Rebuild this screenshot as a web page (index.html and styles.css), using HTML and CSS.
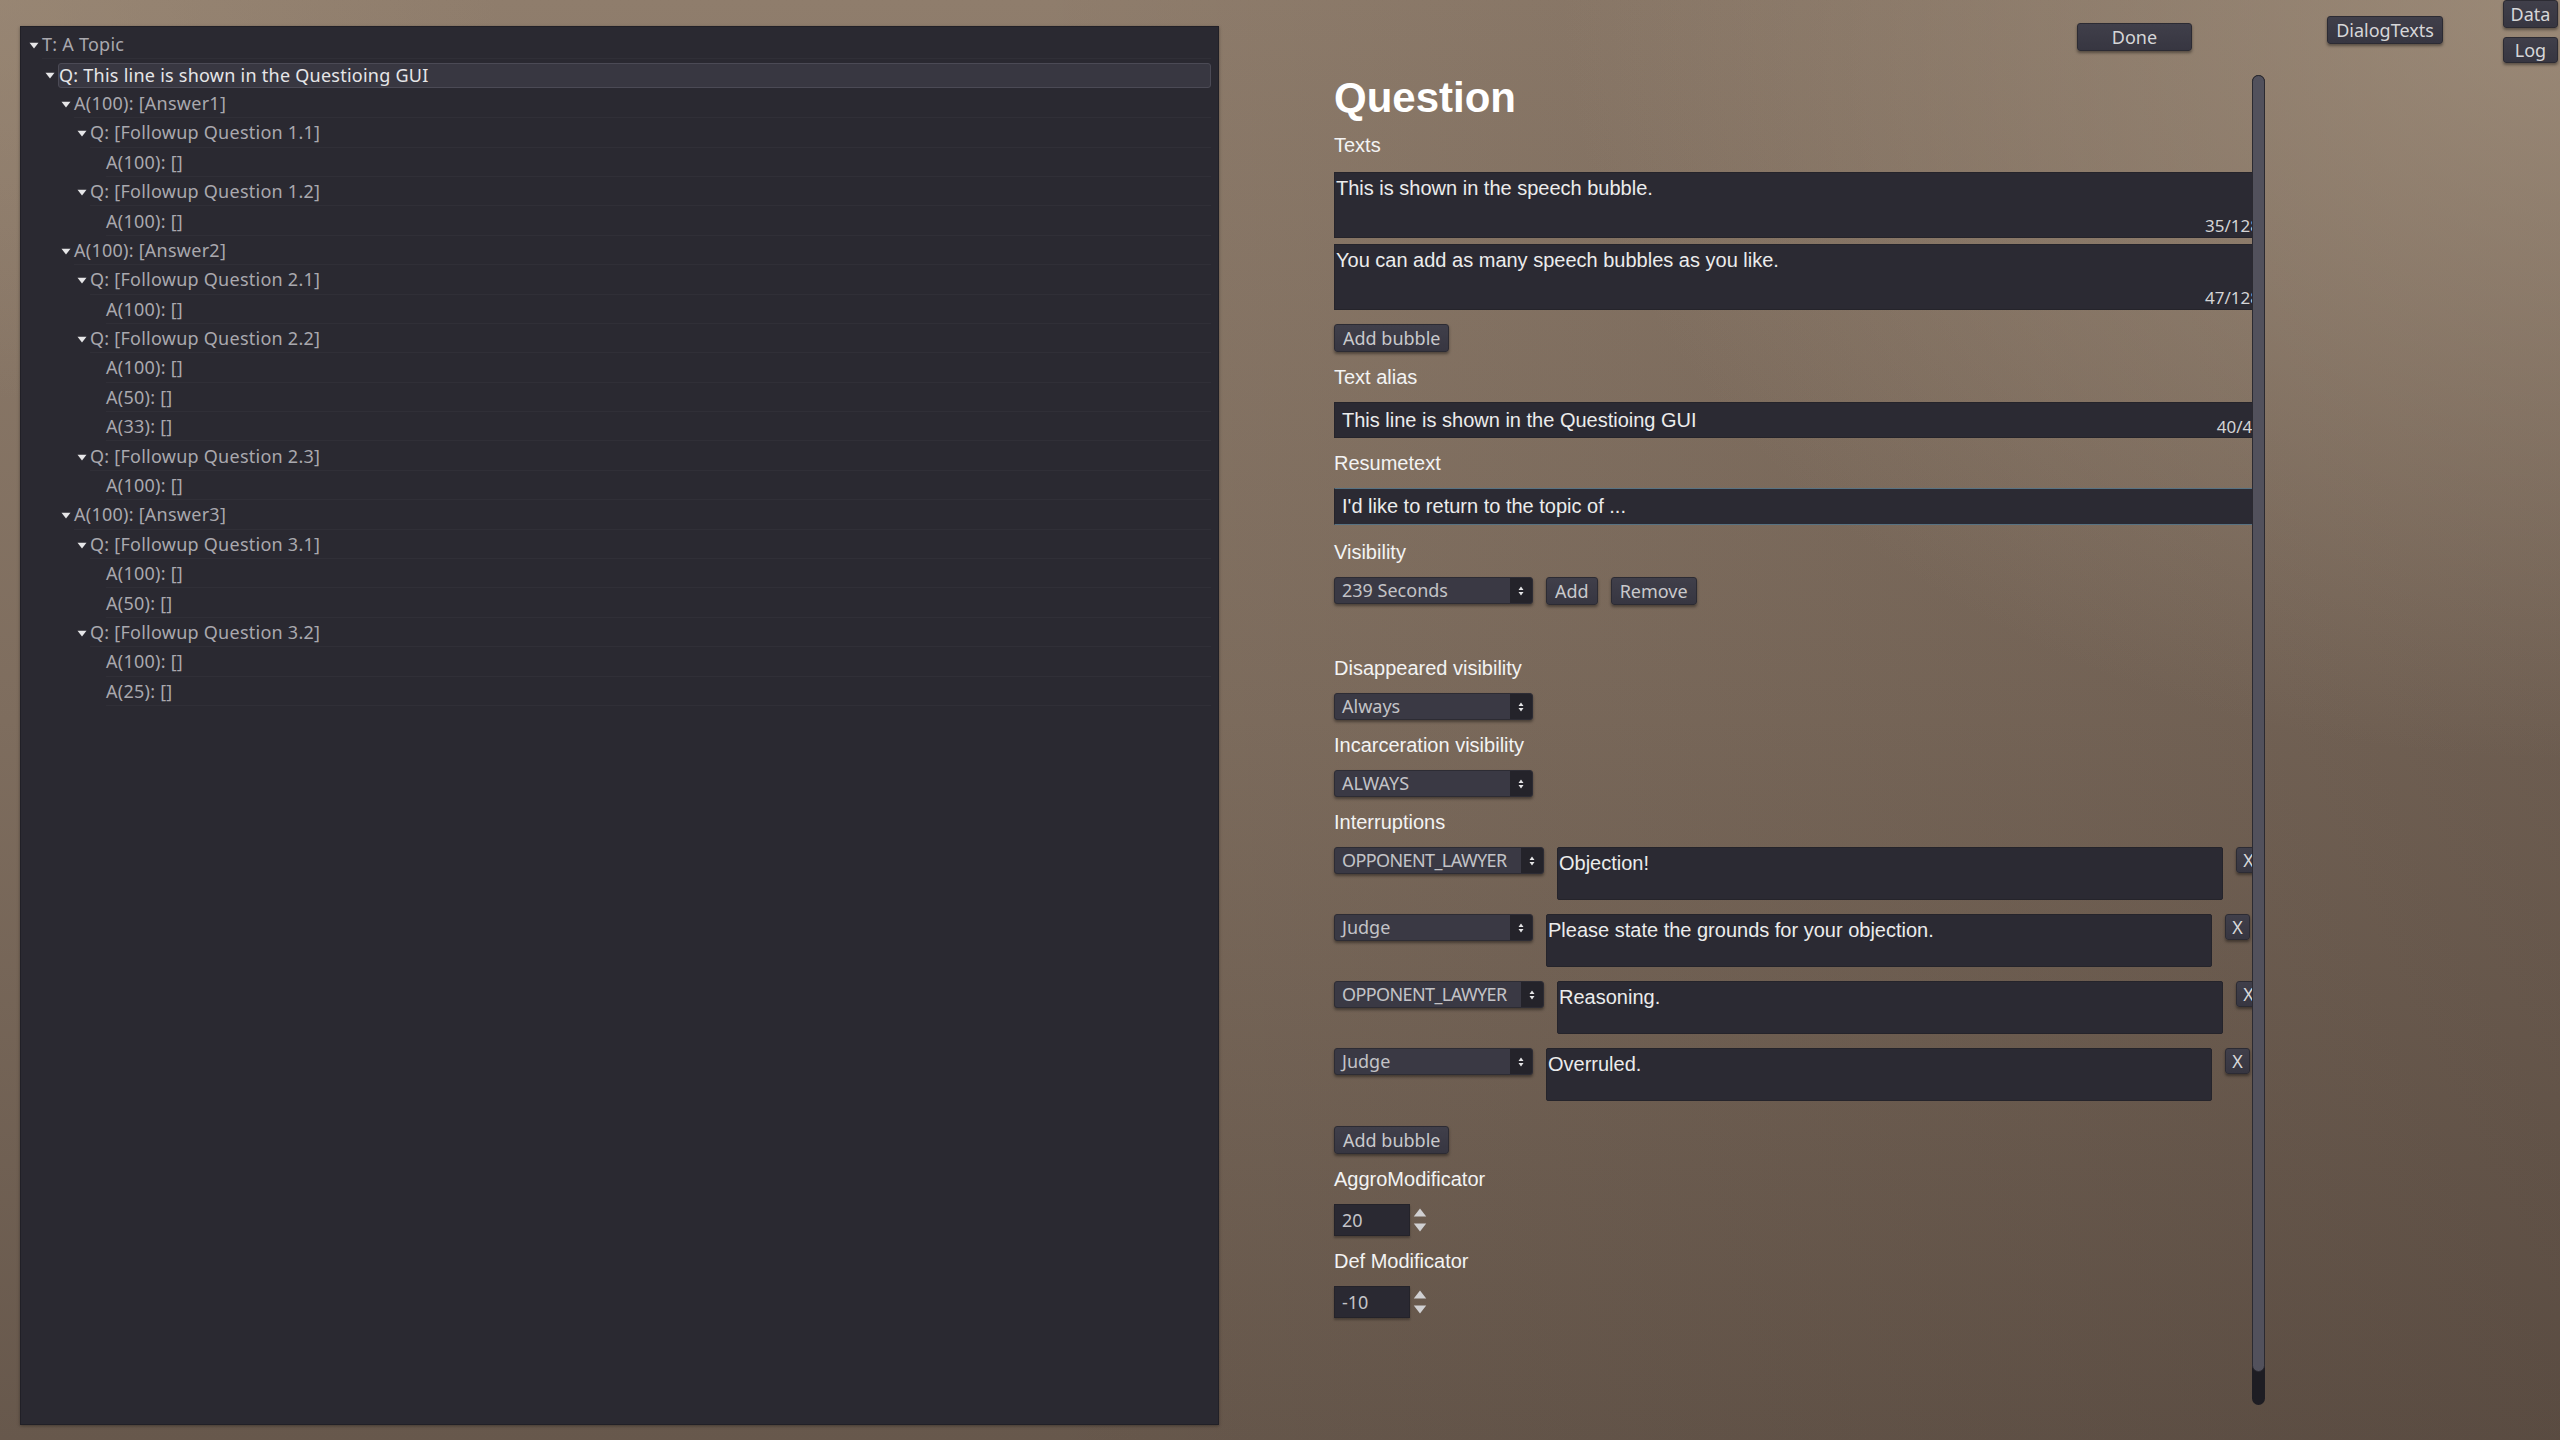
FILE: index.html
```html
<!DOCTYPE html>
<html lang="en">
<head>
    <meta charset="UTF-8" />
    <meta name="viewport" content="width=device-width, initial-scale=1" />
    <title>Dialog Editor - Question</title>
    <link rel="stylesheet" href="styles.css">
</head>
<body>
    <div class="tree-panel">
        <div class="tree-row l0"><svg class="twisty" viewBox="0 0 10 7"><path d="M0.5 0.8h9L5 6.4z"/></svg><span class="tree-label">T: A Topic</span></div>
        <div class="tree-row l1 selected"><svg class="twisty" viewBox="0 0 10 7"><path d="M0.5 0.8h9L5 6.4z"/></svg><span class="tree-label">Q: This line is shown in the Questioing GUI</span></div>
        <div class="tree-row l2"><svg class="twisty" viewBox="0 0 10 7"><path d="M0.5 0.8h9L5 6.4z"/></svg><span class="tree-label">A(100): [Answer1]</span></div>
        <div class="tree-row l3"><svg class="twisty" viewBox="0 0 10 7"><path d="M0.5 0.8h9L5 6.4z"/></svg><span class="tree-label">Q: [Followup Question 1.1]</span></div>
        <div class="tree-row l4"><span class="twisty"></span><span class="tree-label">A(100): []</span></div>
        <div class="tree-row l3"><svg class="twisty" viewBox="0 0 10 7"><path d="M0.5 0.8h9L5 6.4z"/></svg><span class="tree-label">Q: [Followup Question 1.2]</span></div>
        <div class="tree-row l4"><span class="twisty"></span><span class="tree-label">A(100): []</span></div>
        <div class="tree-row l2"><svg class="twisty" viewBox="0 0 10 7"><path d="M0.5 0.8h9L5 6.4z"/></svg><span class="tree-label">A(100): [Answer2]</span></div>
        <div class="tree-row l3"><svg class="twisty" viewBox="0 0 10 7"><path d="M0.5 0.8h9L5 6.4z"/></svg><span class="tree-label">Q: [Followup Question 2.1]</span></div>
        <div class="tree-row l4"><span class="twisty"></span><span class="tree-label">A(100): []</span></div>
        <div class="tree-row l3"><svg class="twisty" viewBox="0 0 10 7"><path d="M0.5 0.8h9L5 6.4z"/></svg><span class="tree-label">Q: [Followup Question 2.2]</span></div>
        <div class="tree-row l4"><span class="twisty"></span><span class="tree-label">A(100): []</span></div>
        <div class="tree-row l4"><span class="twisty"></span><span class="tree-label">A(50): []</span></div>
        <div class="tree-row l4"><span class="twisty"></span><span class="tree-label">A(33): []</span></div>
        <div class="tree-row l3"><svg class="twisty" viewBox="0 0 10 7"><path d="M0.5 0.8h9L5 6.4z"/></svg><span class="tree-label">Q: [Followup Question 2.3]</span></div>
        <div class="tree-row l4"><span class="twisty"></span><span class="tree-label">A(100): []</span></div>
        <div class="tree-row l2"><svg class="twisty" viewBox="0 0 10 7"><path d="M0.5 0.8h9L5 6.4z"/></svg><span class="tree-label">A(100): [Answer3]</span></div>
        <div class="tree-row l3"><svg class="twisty" viewBox="0 0 10 7"><path d="M0.5 0.8h9L5 6.4z"/></svg><span class="tree-label">Q: [Followup Question 3.1]</span></div>
        <div class="tree-row l4"><span class="twisty"></span><span class="tree-label">A(100): []</span></div>
        <div class="tree-row l4"><span class="twisty"></span><span class="tree-label">A(50): []</span></div>
        <div class="tree-row l3"><svg class="twisty" viewBox="0 0 10 7"><path d="M0.5 0.8h9L5 6.4z"/></svg><span class="tree-label">Q: [Followup Question 3.2]</span></div>
        <div class="tree-row l4"><span class="twisty"></span><span class="tree-label">A(100): []</span></div>
        <div class="tree-row l4"><span class="twisty"></span><span class="tree-label">A(25): []</span></div>
    </div>

    <div class="editor">
        <div class="editor-top">
            <button class="btn btn-done">Done</button>
        </div>
        <div class="scroll-area">
            <div class="form">
                <h1 class="form-title">Question</h1>

                <div class="field-label">Texts</div>
                <div class="bubble-list">
                    <div class="text-edit">
                        <span class="te-text">This is shown in the speech bubble.</span>
                        <span class="counter">35/128</span>
                    </div>
                    <div class="text-edit">
                        <span class="te-text">You can add as many speech bubbles as you like.</span>
                        <span class="counter">47/128</span>
                    </div>
                </div>
                <button class="btn">Add bubble</button>

                <div class="field-label">Text alias</div>
                <div class="line-edit">
                    <span>This line is shown in the Questioing GUI</span>
                    <span class="counter">40/40</span>
                </div>

                <div class="field-label">Resumetext</div>
                <div class="line-edit focused">
                    <span>I'd like to return to the topic of ...</span>
                </div>

                <div class="field-label shift">Visibility</div>
                <div class="control-row">
                    <div class="option-button">
                        <span class="ob-text">239 Seconds</span>
                        <span class="ob-arrows"><svg viewBox="0 0 6 12"><path d="M3 1.5L5.5 5H0.5z M3 10.5L5.5 7H0.5z"/></svg></span>
                    </div>
                    <button class="btn">Add</button>
                    <button class="btn">Remove</button>
                </div>
                <div class="visibility-list"></div>

                <div class="field-label">Disappeared visibility</div>
                <div class="option-button">
                    <span class="ob-text">Always</span>
                    <span class="ob-arrows"><svg viewBox="0 0 6 12"><path d="M3 1.5L5.5 5H0.5z M3 10.5L5.5 7H0.5z"/></svg></span>
                </div>

                <div class="field-label">Incarceration visibility</div>
                <div class="option-button">
                    <span class="ob-text">ALWAYS</span>
                    <span class="ob-arrows"><svg viewBox="0 0 6 12"><path d="M3 1.5L5.5 5H0.5z M3 10.5L5.5 7H0.5z"/></svg></span>
                </div>

                <div class="field-label">Interruptions</div>
                <div class="interruptions">
                    <div class="interruption">
                        <div class="option-button wide">
                            <span class="ob-text">OPPONENT_LAWYER</span>
                            <span class="ob-arrows"><svg viewBox="0 0 6 12"><path d="M3 1.5L5.5 5H0.5z M3 10.5L5.5 7H0.5z"/></svg></span>
                        </div>
                        <div class="text-edit short"><span class="te-text">Objection!</span></div>
                        <button class="btn btn-x">X</button>
                    </div>
                    <div class="interruption">
                        <div class="option-button">
                            <span class="ob-text">Judge</span>
                            <span class="ob-arrows"><svg viewBox="0 0 6 12"><path d="M3 1.5L5.5 5H0.5z M3 10.5L5.5 7H0.5z"/></svg></span>
                        </div>
                        <div class="text-edit short"><span class="te-text">Please state the grounds for your objection.</span></div>
                        <button class="btn btn-x">X</button>
                    </div>
                    <div class="interruption">
                        <div class="option-button wide">
                            <span class="ob-text">OPPONENT_LAWYER</span>
                            <span class="ob-arrows"><svg viewBox="0 0 6 12"><path d="M3 1.5L5.5 5H0.5z M3 10.5L5.5 7H0.5z"/></svg></span>
                        </div>
                        <div class="text-edit short"><span class="te-text">Reasoning.</span></div>
                        <button class="btn btn-x">X</button>
                    </div>
                    <div class="interruption">
                        <div class="option-button">
                            <span class="ob-text">Judge</span>
                            <span class="ob-arrows"><svg viewBox="0 0 6 12"><path d="M3 1.5L5.5 5H0.5z M3 10.5L5.5 7H0.5z"/></svg></span>
                        </div>
                        <div class="text-edit short"><span class="te-text">Overruled.</span></div>
                        <button class="btn btn-x">X</button>
                    </div>
                </div>
                <button class="btn btn-add-interruption">Add bubble</button>

                <div class="field-label">AggroModificator</div>
                <div class="spin-box">
                    <span class="spin-field">20</span>
                    <svg class="spin-arrows" viewBox="0 0 10 18"><path d="M5 2.5L8.5 7H1.5z M5 15.5L8.5 11H1.5z"/></svg>
                </div>

                <div class="field-label">Def Modificator</div>
                <div class="spin-box">
                    <span class="spin-field">-10</span>
                    <svg class="spin-arrows" viewBox="0 0 10 18"><path d="M5 2.5L8.5 7H1.5z M5 15.5L8.5 11H1.5z"/></svg>
                </div>
            </div>
            <div class="scrollbar"><div class="grabber"></div></div>
        </div>
    </div>

    <div class="side">
        <button class="btn btn-dialogtexts">DialogTexts</button>
    </div>
    <div class="corner">
        <button class="btn btn-corner">Data</button>
        <button class="btn btn-corner btn-log">Log</button>
    </div>
</body>
</html>
```

FILE: styles.css
```css
* {
    box-sizing: border-box;
}
body {
    margin: 0;
    width: 2560px;
    height: 1440px;
    overflow: hidden;
    display: flex;
    align-items: flex-start;
    font-family: "Noto Sans", sans-serif;
    background:
        radial-gradient(ellipse 1000px 760px at 100% 0%, rgba(168, 150, 130, 0.7), rgba(168, 150, 130, 0) 100%),
        radial-gradient(ellipse 500px 400px at 0% 0%, rgba(160, 142, 122, 0.5), rgba(160, 142, 122, 0) 100%),
        linear-gradient(to right, rgba(0, 0, 0, 0) 40%, rgba(20, 10, 10, 0.16) 100%),
        linear-gradient(to bottom, #8f7d6c 0%, #7e6d5e 50%, #67584c 100%);
}

/* ---------- tree ---------- */
.tree-panel {
    margin: 26px 0 0 20px;
    width: 1199px;
    height: 1399px;
    padding: 3px 7px 0 0;
    background-color: #2a2931;
    border: 1px solid #212027;
    box-shadow: 0 1px 3px rgba(0, 0, 0, 0.35);
}
.tree-row {
    display: flex;
    align-items: center;
    height: 29.4px;
    font-size: 18px;
    letter-spacing: 0.25px;
    color: #a9a8ae;
}
.l0 { padding-left: 8px; }
.l1 { padding-left: 24px; }
.l2 { padding-left: 40px; }
.l3 { padding-left: 56px; }
.l4 { padding-left: 72px; }
.twisty {
    flex: none;
    width: 10px;
    height: 7px;
    margin: 2px 3px 0 0;
    fill: #e6e6e8;
}
.tree-label {
    flex: 1;
    height: 100%;
    display: flex;
    align-items: center;
    white-space: nowrap;
    border-bottom: 1px solid #302f37;
}
.tree-row.selected .tree-label {
    height: 25px;
    margin-top: 2px;
    color: #e6e6e8;
    background-color: #383741;
    border: 1px solid #4b4a55;
    border-radius: 3px;
}

/* ---------- editor ---------- */
.editor {
    margin-left: 115px;
    width: 931px;
}
.editor-top {
    height: 75px;
    display: flex;
    justify-content: flex-end;
    align-items: flex-start;
    padding: 23px 73px 0 0;
}
.scroll-area {
    position: relative;
    height: 1330px;
}
.form {
    display: flex;
    flex-direction: column;
    align-items: flex-start;
    gap: 14px;
    color: #f2f2f2;
}
.form-title {
    margin: 0;
    font-family: "Liberation Sans", Arial, sans-serif;
    font-size: 42px;
    font-weight: bold;
    line-height: 45px;
    color: #ffffff;
}
.field-label {
    font-family: "Liberation Sans", Arial, sans-serif;
    font-size: 20px;
    line-height: 22px;
    color: #f3f3f3;
}
.field-label.shift {
    margin-top: 2px;
}

.bubble-list {
    width: 100%;
    margin-top: 2px;
    display: flex;
    flex-direction: column;
    gap: 6px;
}
.text-edit {
    width: 100%;
    height: 66px;
    display: flex;
    flex-direction: column;
    padding: 4px 4px 1px 1px;
    background-color: #2b2a33;
    border: 1px solid #25242b;
    font-family: "Liberation Sans", Arial, sans-serif;
    font-size: 20px;
    color: #ececec;
}
.text-edit.short {
    flex: none;
    width: 666px;
    height: 53px;
    border-radius: 2px;
}
.counter {
    margin-top: auto;
    align-self: flex-end;
    font-family: "Noto Sans", sans-serif;
    font-size: 17px;
    line-height: 20px;
    color: #d4d4d6;
}
.line-edit {
    width: 100%;
    height: 36px;
    display: flex;
    align-items: center;
    padding: 0 2px 0 7px;
    background-color: #2b2a33;
    border: 1px solid #25242b;
    font-family: "Liberation Sans", Arial, sans-serif;
    font-size: 20px;
    color: #ececec;
}
.line-edit .counter {
    margin: 0 0 0 auto;
}
.line-edit.focused {
    height: 37px;
    border-top-color: #587282;
    border-bottom-color: #587282;
}

/* ---------- buttons & pickers ---------- */
.btn {
    height: 28px;
    padding: 0 8px;
    font-family: "Noto Sans", sans-serif;
    font-size: 18px;
    line-height: 26px;
    color: #c9c9cc;
    background: linear-gradient(#403f4a, #373641);
    border: 1px solid #2c2b33;
    border-radius: 3px;
    box-shadow: 0 2px 3px rgba(0, 0, 0, 0.4);
}
.btn-done {
    width: 115px;
    color: #d6d6d8;
}
.control-row {
    display: flex;
    gap: 13px;
}
.option-button {
    flex: none;
    width: 199px;
    height: 27px;
    display: flex;
    background-color: #3a3944;
    border: 1px solid #2d2c34;
    border-radius: 3px;
    box-shadow: 0 2px 3px rgba(0, 0, 0, 0.4);
    overflow: hidden;
}
.option-button.wide {
    width: 210px;
}
.ob-text {
    flex: 1;
    padding-left: 7px;
    font-size: 18px;
    line-height: 25px;
    color: #c3c3c7;
    white-space: nowrap;
    overflow: hidden;
}
.option-button.wide .ob-text {
    letter-spacing: -0.6px;
}
.ob-arrows {
    flex: none;
    width: 22px;
    display: flex;
    align-items: center;
    justify-content: center;
    background-color: #24232a;
}
.ob-arrows svg {
    width: 6px;
    height: 12px;
    fill: #e4e4e6;
}
.visibility-list {
    height: 24px;
}

.interruptions {
    display: flex;
    flex-direction: column;
    gap: 14px;
}
.interruption {
    display: flex;
    align-items: flex-start;
    gap: 13px;
}
.btn-x {
    flex: none;
    width: 25px;
    height: 26px;
    padding: 0;
    line-height: 24px;
    text-align: center;
    color: #d8d8da;
}
.btn-add-interruption {
    margin-top: 11px;
}

.spin-box {
    display: flex;
    align-items: center;
}
.spin-field {
    width: 76px;
    height: 32px;
    padding-left: 7px;
    font-size: 18px;
    line-height: 30px;
    color: #c4c4c8;
    background-color: #2a2932;
    border: 1px solid #24232a;
    box-shadow: 0 2px 2px rgba(0, 0, 0, 0.3);
}
.spin-arrows {
    width: 20px;
    height: 32px;
    fill: #d0d0d2;
}

/* ---------- scrollbar ---------- */
.scrollbar {
    position: absolute;
    top: 0;
    right: 0;
    width: 13px;
    height: 1330px;
    background-color: #1e1d23;
    border-radius: 7px;
}
.grabber {
    height: 1297px;
    background-color: #52515c;
    border: 1px solid #2b2a31;
    border-radius: 7px;
}

/* ---------- right-hand buttons ---------- */
.side {
    margin: 16px 0 0 62px;
}
.btn-dialogtexts {
    width: 116px;
    color: #d6d6d8;
}
.corner {
    margin-left: 60px;
    display: flex;
    flex-direction: column;
    gap: 9px;
}
.btn-corner {
    width: 55px;
    padding: 0;
    text-align: center;
    color: #d6d6d8;
}
.btn-log {
    height: 26px;
    line-height: 24px;
}
```
